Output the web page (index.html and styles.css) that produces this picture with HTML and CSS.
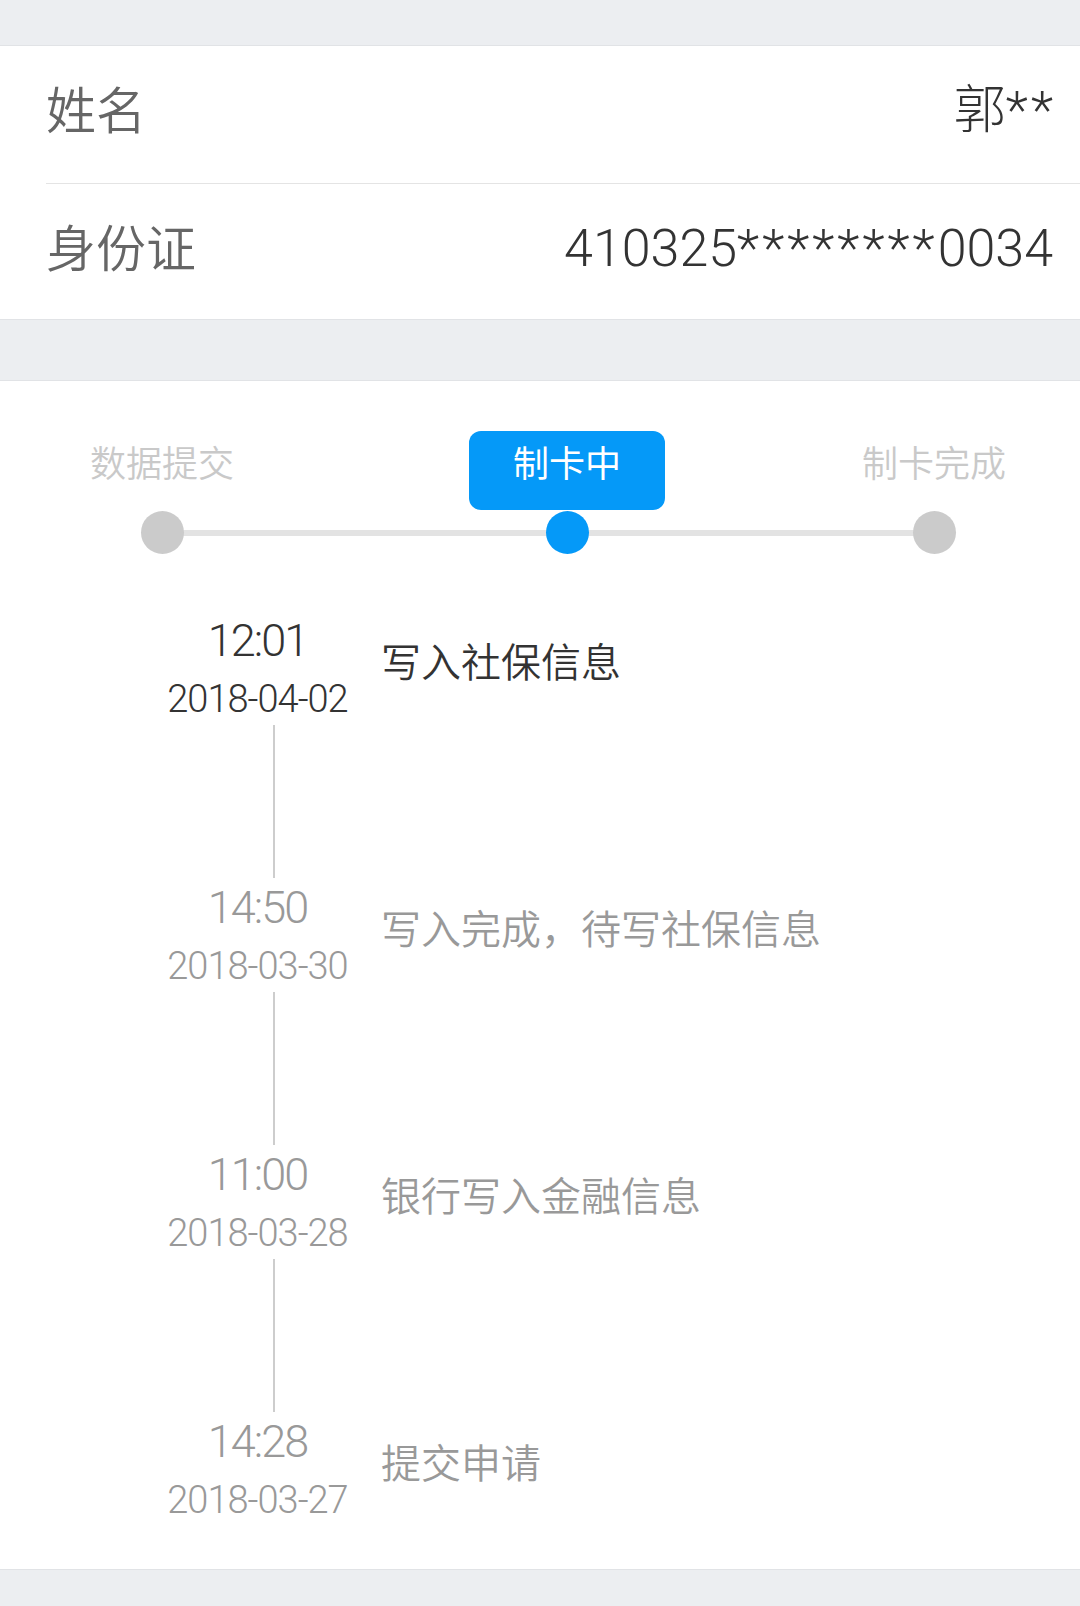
FILE: index.html
```html
<!DOCTYPE html>
<html>

<head>
    <meta charset="utf-8">
    <link rel="stylesheet" href="styles.css">
    <title>社保卡进度</title>
</head>

<body>
    <div class="gap"></div>
    <div class="card">
        <div class="row">
            <span class="label">姓名</span>
            <span class="value">郭<span class="mask tail">**</span></span>
        </div>
        <div class="row">
            <span class="label">身份证</span>
            <span class="value">410325<span class="mask">********</span>0034</span>
        </div>
    </div>
    <div class="gap mid"></div>
    <div class="card progress">
        <!-- steps: names on top, dots on the track below -->
        <div class="steps">
            <span class="step-name s1">数据提交</span>
            <span class="step-name s2 current">制卡中</span>
            <span class="step-name s3">制卡完成</span>
            <i class="track"></i>
            <i class="dot s1"></i>
            <i class="dot s2 on"></i>
            <i class="dot s3"></i>
        </div>

        <div class="timeline">
            <div class="event latest">
                <div class="when">
                    <div class="time">12:01</div>
                    <div class="date">2018-04-02</div>
                </div>
                <div class="what">写入社保信息</div>
            </div>
            <div class="link"></div>
            <div class="event">
                <div class="when">
                    <div class="time">14:50</div>
                    <div class="date">2018-03-30</div>
                </div>
                <div class="what">写入完成，待写社保信息</div>
            </div>
            <div class="link"></div>
            <div class="event">
                <div class="when">
                    <div class="time">11:00</div>
                    <div class="date">2018-03-28</div>
                </div>
                <div class="what">银行写入金融信息</div>
            </div>
            <div class="link"></div>
            <div class="event">
                <div class="when">
                    <div class="time">14:28</div>
                    <div class="date">2018-03-27</div>
                </div>
                <div class="what">提交申请</div>
            </div>
        </div>
    </div>
    <div class="gap"></div>
</body>

</html>
```

FILE: styles.css
```css
body {
    margin: 0;
    background-color: #eceef1;
    font-family: Roboto, "Noto Sans CJK SC", sans-serif;
    color: #333;
}

.gap {
    height: 45px;
}

.gap.mid {
    height: 60px;
}

.card {
    background-color: #fff;
    border-top: 1px solid #e1e3e6;
    border-bottom: 1px solid #e1e3e6;
}

/* name / id rows */
.row {
    box-sizing: border-box;
    height: 137px;
    display: flex;
    justify-content: space-between;
    align-items: flex-start;
    margin-left: 46px;
    padding: 36px 27px 0 0;
}

.row + .row {
    height: 136px;
    border-top: 1px solid #e4e4e4;
}

.label {
    font-family: "Noto Sans CJK SC", sans-serif;
    font-size: 50px;
    line-height: 50px;
    font-weight: 350;
    color: #666;
}

.value {
    font-size: 52px;
    line-height: 58px;
    font-weight: 300;
    white-space: nowrap;
    color: #333;
}

.mask {
    letter-spacing: 3px;
}

.mask.tail {
    margin-right: -3px;
}

/* progress steps */
.progress {
    padding: 50px 0 47px;
}

.steps {
    display: grid;
    grid-template-columns: 324px 486px 248px;
    grid-template-rows: 79px 43px;
    row-gap: 1px;
}

.s1 {
    grid-column: 1;
}

.s2 {
    grid-column: 2;
}

.s3 {
    grid-column: 3;
}

.step-name {
    grid-row: 1;
    justify-self: center;
    padding-top: 12px;
    font-family: "Noto Sans CJK SC", sans-serif;
    font-size: 36px;
    line-height: 36px;
    font-weight: 350;
    color: #c9c9c9;
}

.step-name.current {
    box-sizing: border-box;
    width: 196px;
    height: 79px;
    text-align: center;
    font-weight: 400;
    color: #fff;
    background-color: #0599f8;
    border-radius: 12px;
}

.track {
    grid-row: 2;
    grid-column: 1 / 4;
    align-self: center;
    height: 6px;
    margin: 0 124px 0 162px;
    background-color: #e3e3e3;
}

.dot {
    grid-row: 2;
    justify-self: center;
    width: 43px;
    height: 43px;
    border-radius: 50%;
    background-color: #cbcbcb;
}

.dot.on {
    background-color: #0599f8;
}

/* history */
.timeline {
    margin-top: 61px;
    color: #999;
}

.event {
    display: flex;
    align-items: flex-start;
}

.when {
    width: 235px;
    margin-left: 140px;
    text-align: center;
    font-weight: 300;
}

.time {
    font-size: 45px;
    line-height: 52px;
    letter-spacing: -2px;
}

.date {
    margin-top: 10px;
    font-size: 38px;
    line-height: 44px;
    letter-spacing: -1px;
}

.what {
    margin: 25px 0 0 6px;
    font-family: "Noto Sans CJK SC", sans-serif;
    font-size: 40px;
    line-height: 40px;
    font-weight: 350;
}

.latest {
    color: #333;
}

.link {
    width: 2px;
    height: 153px;
    margin: 4px 0 4px 273px;
    background-color: #cdcdcd;
}
```
